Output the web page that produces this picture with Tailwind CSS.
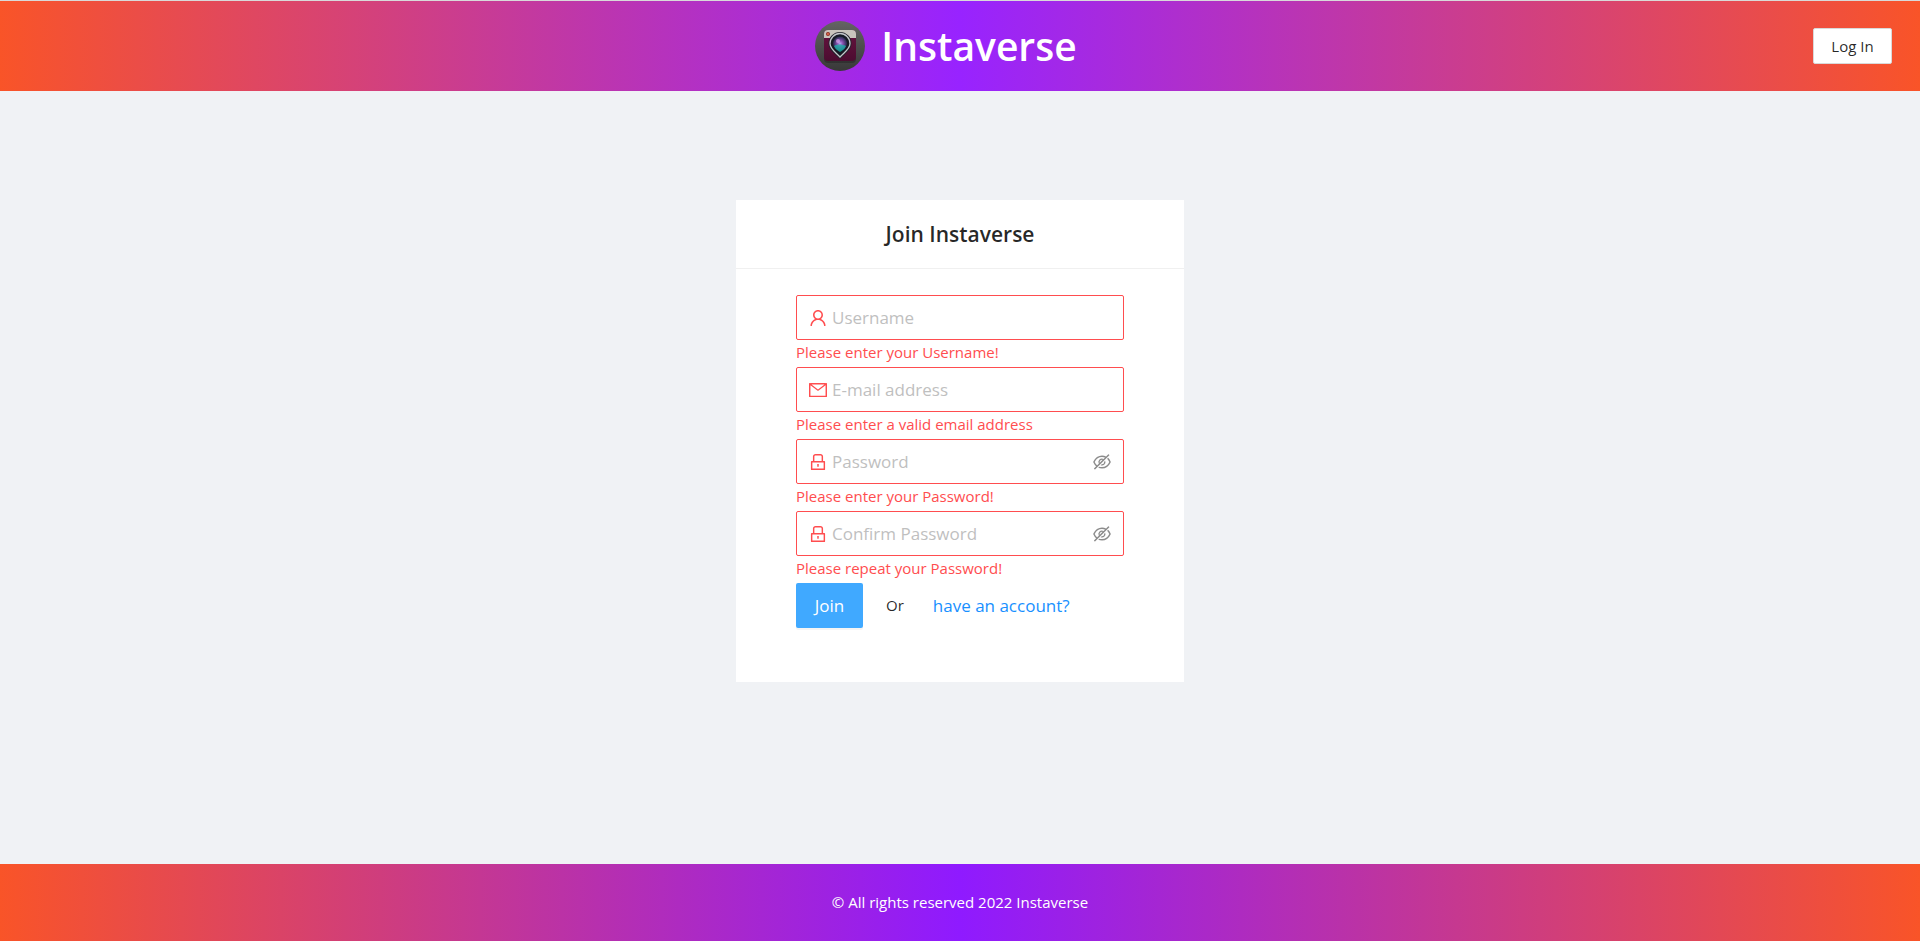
<!DOCTYPE html>
<html lang="en">
<head>
<meta charset="utf-8">
<meta name="viewport" content="width=device-width, initial-scale=1">
<title>Instaverse</title>
<script src="https://cdn.jsdelivr.net/npm/@tailwindcss/browser@4"></script>
</head>
<body class="flex min-h-screen flex-col bg-[#f0f2f5] font-['Segoe_UI','Open_Sans',sans-serif] text-[15px] text-black/85">
<svg class="hidden" aria-hidden="true">
  <symbol id="user" viewBox="64 64 896 896"><path d="M858.5 763.6a374 374 0 00-80.6-119.5 375.63 375.63 0 00-119.5-80.6c-.4-.2-.8-.3-1.2-.5C719.5 518 760 444.7 760 362c0-137-111-248-248-248S264 225 264 362c0 82.7 40.5 156 102.8 201.1-.4.2-.8.3-1.2.5-44.8 18.9-85 46-119.5 80.6a375.63 375.63 0 00-80.6 119.5A371.7 371.7 0 00136 901.8a8 8 0 008 8.2h60c4.4 0 7.9-3.5 8-7.8 2-77.2 33-149.5 87.8-204.3 56.7-56.7 132-87.9 212.2-87.9s155.5 31.2 212.2 87.9C779 752.7 810 825 812 902.2c.1 4.4 3.6 7.8 8 7.8h60a8 8 0 008-8.2c-1-47.8-10.9-94.3-29.5-138.2zM512 534c-45.9 0-89.1-17.9-121.6-50.4S340 407.9 340 362c0-45.9 17.9-89.1 50.4-121.6S466.1 190 512 190s89.1 17.9 121.6 50.4S684 316.1 684 362c0 45.9-17.9 89.1-50.4 121.6S557.9 534 512 534z"/></symbol>
  <symbol id="mail" viewBox="64 64 896 896"><path d="M928 160H96c-17.7 0-32 14.3-32 32v640c0 17.7 14.3 32 32 32h832c17.7 0 32-14.3 32-32V192c0-17.7-14.3-32-32-32zm-40 110.8V792H136V270.8l-27.6-21.5 39.3-50.5 42.8 33.3h643.1l42.8-33.3 39.3 50.5-27.7 21.5zM833.6 232L512 482 190.4 232l-42.8-33.3-39.3 50.5 27.6 21.5 341.6 265.6a55.99 55.99 0 0068.7 0L888 270.8l27.6-21.5-39.3-50.5-42.7 33.2z"/></symbol>
  <symbol id="lock" viewBox="64 64 896 896"><path d="M832 464h-68V240c0-70.7-57.3-128-128-128H388c-70.7 0-128 57.3-128 128v224h-68c-17.7 0-32 14.3-32 32v384c0 17.7 14.3 32 32 32h640c17.7 0 32-14.3 32-32V496c0-17.7-14.3-32-32-32zM332 240c0-30.9 25.1-56 56-56h248c30.9 0 56 25.1 56 56v224H332V240zm460 600H232V536h560v304zM484 701v53c0 4.4 3.6 8 8 8h40c4.4 0 8-3.6 8-8v-53a48.01 48.01 0 10-56 0z"/></symbol>
  <symbol id="eye-off" viewBox="64 64 896 896"><path d="M942.2 486.2Q889.47 375.11 816.7 305l-50.88 50.88C807.31 395.53 843.45 447.4 874.7 512 791.5 684.2 673.4 766 512 766q-72.67 0-133.87-22.38L323 798.75Q408 838 512 838q288.3 0 430.2-300.3a60.29 60.29 0 000-51.5zm-63.57-320.64L836 122.88a8 8 0 00-11.32 0L715.31 232.2Q624.86 186 512 186q-288.3 0-430.2 300.3a60.3 60.3 0 000 51.5q56.69 119.4 136.5 191.41L112.48 835a8 8 0 000 11.31L155.17 889a8 8 0 0011.31 0l712.15-712.12a8 8 0 000-11.32zM149.3 512C232.6 339.8 350.7 258 512 258c54.54 0 104.13 9.36 149.12 28.39l-70.3 70.3a176 176 0 00-238.13 238.13l-83.42 83.42C223.1 637.49 183.3 582.28 149.3 512zm246.7 0a112.11 112.11 0 01146.2-106.69L401.31 546.2A112 112 0 01396 512z"/><path d="M508 624c-3.46 0-6.87-.16-10.25-.47l-52.82 52.82a176.09 176.09 0 00227.42-227.42l-52.82 52.82c.31 3.38.47 6.79.47 10.25a111.94 111.94 0 01-112 112z"/></symbol>
</svg>

<header class="grid grid-cols-[1fr_auto_1fr] items-center border-t border-[#d9d9d9] bg-[linear-gradient(90deg,#f95428,#9823ff,#f95428)] px-7 py-5">
  <div></div>
  <div class="flex items-center gap-4 pr-7">
    <svg class="size-[50px]" viewBox="0 0 50 50" aria-hidden="true">
      <defs>
        <linearGradient id="disc" x1="0" y1="0" x2="0" y2="1"><stop offset="0" stop-color="#646464"/><stop offset="1" stop-color="#383838"/></linearGradient>
        <linearGradient id="plum" x1="0" y1="0" x2="0" y2="1"><stop offset="0" stop-color="#66133f"/><stop offset="1" stop-color="#4c0c30"/></linearGradient>
        <radialGradient id="lens" cx=".5" cy=".5" r=".55"><stop offset="0" stop-color="#b9a4f0"/><stop offset=".35" stop-color="#8a55b5"/><stop offset="1" stop-color="#14203a"/></radialGradient>
      </defs>
      <circle cx="25" cy="25" r="25" fill="url(#disc)"/>
      <rect x="9" y="10" width="32" height="32" rx="4" fill="#2b2b2b" opacity=".7"/>
      <rect x="9" y="9" width="32" height="31" rx="4" fill="url(#plum)"/>
      <path d="M9 17v-4a4 4 0 014-4h24a4 4 0 014 4v4z" fill="#c9c4bd"/>
      <circle cx="13" cy="13" r="2" fill="#8d2c22"/><circle cx="13" cy="13" r="1" fill="#e0704c"/>
      <path d="M25 38C20 33 13.500 29 13.500 22.500a11.500 11.500 0 0123 0C36.500 29 30 33 25 38z" fill="#24232c"/>
      <path d="M25 36C20.500 31 15 28 15 22.500a10 10 0 0120 0C35 28 29.500 31 25 36z" fill="#171a24" stroke="#c3c6ca" stroke-width="1.300"/>
      <circle cx="25" cy="22.500" r="7" fill="url(#lens)"/>
      <path d="M19 25c3-2 8-2 12 0-1 3-4 5-6 6-2-1-5-3-6-6z" fill="#1ab6a8" opacity=".75"/>
      <circle cx="23" cy="20" r="2" fill="#d7a6ee" opacity=".7"/>
    </svg>
    <h1 class="text-[39px] leading-[50px] font-semibold text-white">Instaverse</h1>
  </div>
  <button type="button" class="h-9 w-[79px] justify-self-end rounded-xs border border-[#d9d9d9] bg-white">Log In</button>
</header>

<main class="flex grow flex-col items-center pt-[109px]">
  <section class="w-full max-w-[448px] bg-white">
    <h2 class="border-b border-[#f0f0f0] py-5 text-center text-[21px] leading-7 font-semibold">Join Instaverse</h2>
    <form class="px-[60px] pt-[26px] pb-[54px]" novalidate>
      <div>
        <div class="flex h-[45px] items-center gap-[5px] rounded-xs border border-[#ff4d4f] px-3">
          <svg class="size-[18px] shrink-0 fill-[#ff4d4f]" aria-hidden="true"><use href="#user"/></svg>
          <input type="text" aria-label="Username" placeholder="Username" class="min-w-0 grow text-[17px] outline-none placeholder:text-[#bfbfbf]">
        </div>
        <p class="h-[27px] leading-[25px] text-[#ff4d4f]">Please enter your Username!</p>
      </div>
      <div>
        <div class="flex h-[45px] items-center gap-[5px] rounded-xs border border-[#ff4d4f] px-3">
          <svg class="size-[18px] shrink-0 fill-[#ff4d4f]" aria-hidden="true"><use href="#mail"/></svg>
          <input type="email" aria-label="E-mail address" placeholder="E-mail address" class="min-w-0 grow text-[17px] outline-none placeholder:text-[#bfbfbf]">
        </div>
        <p class="h-[27px] leading-[25px] text-[#ff4d4f]">Please enter a valid email address</p>
      </div>
      <div>
        <div class="flex h-[45px] items-center gap-[5px] rounded-xs border border-[#ff4d4f] px-3">
          <svg class="size-[18px] shrink-0 fill-[#ff4d4f]" aria-hidden="true"><use href="#lock"/></svg>
          <input type="password" aria-label="Password" placeholder="Password" class="min-w-0 grow text-[17px] outline-none placeholder:text-[#bfbfbf]">
          <button type="button" aria-label="Show password"><svg class="size-[18px] fill-[#8c8c8c]" aria-hidden="true"><use href="#eye-off"/></svg></button>
        </div>
        <p class="h-[27px] leading-[25px] text-[#ff4d4f]">Please enter your Password!</p>
      </div>
      <div>
        <div class="flex h-[45px] items-center gap-[5px] rounded-xs border border-[#ff4d4f] px-3">
          <svg class="size-[18px] shrink-0 fill-[#ff4d4f]" aria-hidden="true"><use href="#lock"/></svg>
          <input type="password" aria-label="Confirm Password" placeholder="Confirm Password" class="min-w-0 grow text-[17px] outline-none placeholder:text-[#bfbfbf]">
          <button type="button" aria-label="Show confirmed password"><svg class="size-[18px] fill-[#8c8c8c]" aria-hidden="true"><use href="#eye-off"/></svg></button>
        </div>
        <p class="h-[27px] leading-[25px] text-[#ff4d4f]">Please repeat your Password!</p>
      </div>
      <div class="flex items-center">
        <button type="submit" class="h-[45px] w-[67px] rounded-xs bg-[#40a9ff] text-[17px] text-white shadow-[0_2px_0_rgba(0,0,0,0.045)]">Join</button>
        <span class="ml-[23px]">Or</span>
        <a href="#" class="ml-[29px] text-[17px] text-[#1890ff]">have an account?</a>
      </div>
    </form>
  </section>
</main>

<footer class="bg-[linear-gradient(90deg,#f95428,#8f1aff,#f95428)] py-7 text-center leading-[21px] text-white">© All rights reserved 2022 Instaverse</footer>
</body>
</html>
